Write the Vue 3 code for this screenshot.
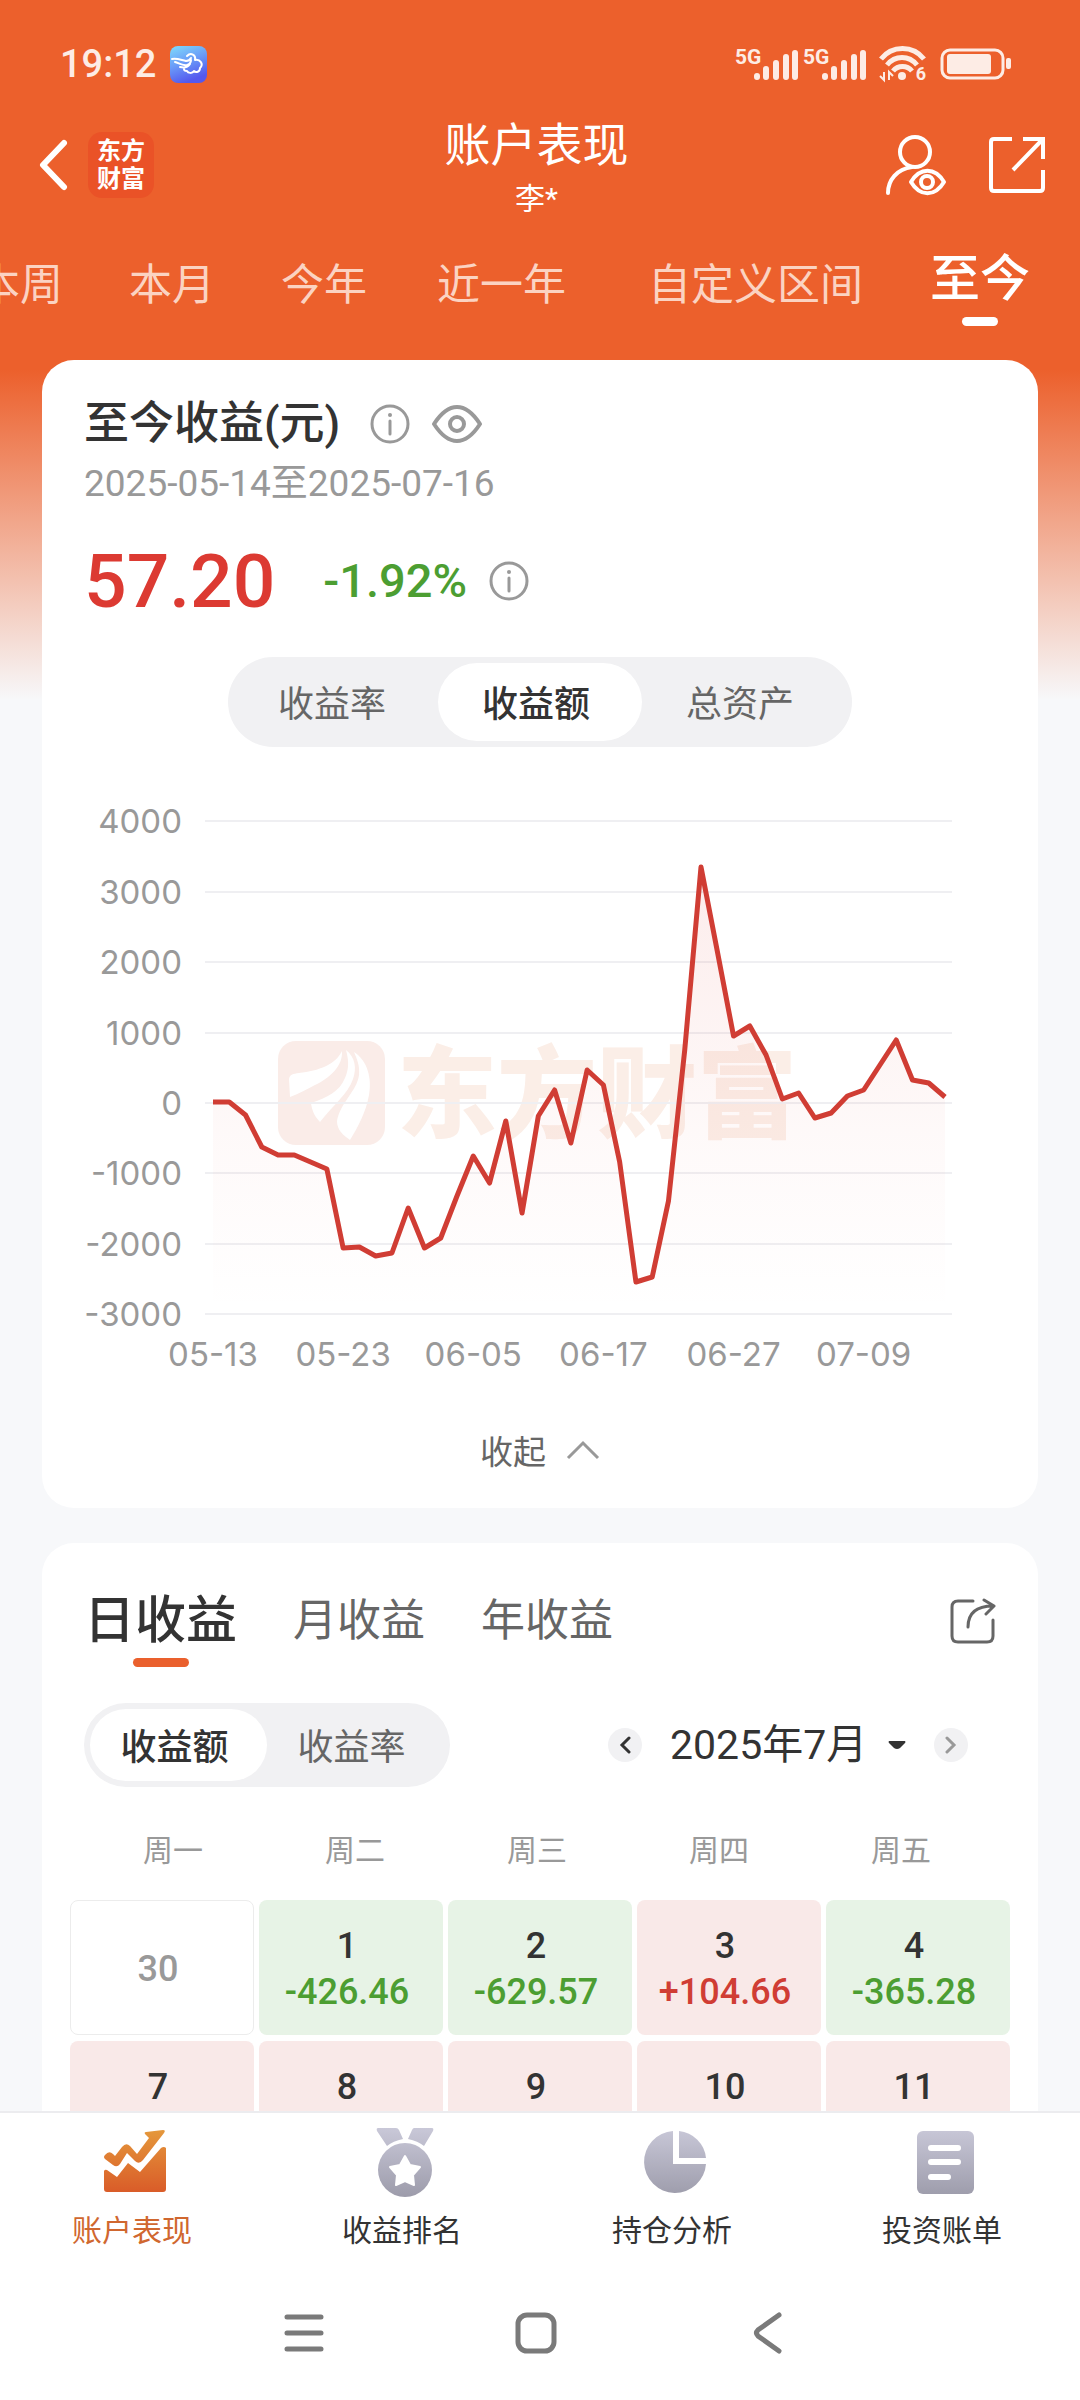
<template>
  <div class="page">
    <main class="scroll">
      <div class="status-bar">
        <span class="status-time">19:12</span>
        <svg class="status-app" width="37" height="37" viewBox="0 0 37 37" aria-hidden="true">
          <defs>
            <linearGradient id="app-bg" x1="0" y1="0" x2="0.4" y2="1">
              <stop offset="0" stop-color="#7fdcfb" />
              <stop offset="0.5" stop-color="#6b9df8" />
              <stop offset="1" stop-color="#5458ee" />
            </linearGradient>
          </defs>
          <rect width="37" height="37" rx="8" fill="url(#app-bg)" />
          <path
            d="M2 13c5-1 9 1 14 2 3 0 4-1 5-3M5 16c4 1 7 4 12 3 3-1 4-3 4-5M10 21c4 1 8 0 10-3"
            fill="none"
            stroke="#fff"
            stroke-width="2"
            stroke-linecap="round"
          />
          <path
            d="M17 10c4-4 9-1 8 4 5-1 9 4 5 8 0 4-4 5-6 3-2 3-6 2-7 0-2 0-3 0-3-2"
            fill="none"
            stroke="#fff"
            stroke-width="2"
            stroke-linecap="round"
            stroke-linejoin="round"
          />
        </svg>
        <div class="status-icons">
          <div v-for="n in 2" :key="n" class="signal">
            <span class="signal-text">5G</span>
            <svg width="46" height="32" viewBox="0 0 46 32" aria-hidden="true">
              <path
                d="M4 28v-1M13 28v-8M23 28V14M33 28V8M42 28V4"
                fill="none"
                stroke="#fdece5"
                stroke-width="6"
                stroke-linecap="round"
              />
            </svg>
          </div>
          <div class="wifi">
            <svg width="47" height="38" viewBox="0 0 47 38" aria-hidden="true">
              <g fill="none" stroke="#fdece5" stroke-width="5">
                <path d="M2 14c11-14 32-14 43 0" />
                <path d="M8 20c8-10 22-10 30 0" />
                <path d="M14 26c5-6 14-6 19 0" />
              </g>
              <circle cx="23" cy="31" r="4" fill="#fdece5" />
              <path d="M5 27v8l-4-4M10 35v-8l4 4" fill="none" stroke="#fdece5" stroke-width="2" />
            </svg>
            <span class="wifi-text">6</span>
          </div>
          <svg class="battery" width="71" height="32" viewBox="0 0 71 32" aria-hidden="true">
            <rect x="2" y="2" width="61" height="28" rx="8" fill="none" stroke="#fdece5" stroke-width="3" />
            <rect x="7" y="6" width="44" height="20" rx="3" fill="#fdece5" />
            <rect x="66" y="10" width="5" height="11" rx="2" fill="#fdece5" />
          </svg>
        </div>
      </div>

      <header class="app-bar">
        <div class="app-bar-side">
          <button type="button" class="icon-button" aria-label="返回">
            <svg width="30" height="52" viewBox="0 0 30 52">
              <path d="M26 4 5 26l21 22" fill="none" stroke="#fff" stroke-width="6" stroke-linecap="round" stroke-linejoin="round" />
            </svg>
          </button>
          <div class="brand">
            <span>东方</span>
            <span>财富</span>
          </div>
        </div>
        <div class="app-bar-title">
          <h1>账户表现</h1>
          <p>李*</p>
        </div>
        <div class="app-bar-side app-bar-side--right">
          <button type="button" class="icon-button" aria-label="账户">
            <svg width="62" height="62" viewBox="0 0 62 62" fill="none" stroke="#fff" stroke-width="4" stroke-linecap="round">
              <circle cx="30" cy="18" r="15" />
              <path d="M3 59c0-13 9-24 24-26" />
              <path d="M26 48c9-15 24-15 33 0-9 15-24 15-33 0Z" stroke-linejoin="round" />
              <circle cx="42" cy="48" r="6" />
            </svg>
          </button>
          <button type="button" class="icon-button" aria-label="分享">
            <svg width="56" height="58" viewBox="0 0 56 58" fill="none" stroke="#fff" stroke-width="4">
              <path d="M23 3H5q-3 0-3 3v46q0 3 3 3h46q3 0 3-3V34" />
              <path d="M34 3h20v20M53 4 24 34" />
            </svg>
          </button>
        </div>
      </header>

      <nav class="range-tabs">
        <button
          v-for="item in ranges"
          :key="item"
          type="button"
          class="range-tab"
          :class="{ 'range-tab--active': item === activeRange }"
          :style="{ width: `${item.length * 51 + 50}px` }"
          @click="activeRange = item"
        >
          {{ item }}
        </button>
      </nav>

      <section class="card summary">
        <div class="summary-head">
          <h2>至今收益(元)</h2>
          <button type="button" class="icon-button" aria-label="说明">
            <svg width="40" height="40" viewBox="0 0 40 40" fill="none" stroke="#999" stroke-width="3">
              <circle cx="20" cy="20" r="18" />
              <path d="M20 17v13" stroke-linecap="round" />
              <circle cx="20" cy="11" r="2" fill="#999" stroke="none" />
            </svg>
          </button>
          <button type="button" class="icon-button" aria-label="隐藏金额">
            <svg width="50" height="40" viewBox="0 0 50 40" fill="none" stroke="#999" stroke-width="4">
              <path d="M2 20Q13 3 25 3t23 17Q37 37 25 37T2 20Z" stroke-linejoin="round" />
              <circle cx="25" cy="20" r="7" />
            </svg>
          </button>
        </div>
        <p class="summary-range">2025-05-14至2025-07-16</p>
        <div class="summary-value">
          <strong class="amount">57.20</strong>
          <span class="rate">-1.92%</span>
          <button type="button" class="icon-button" aria-label="收益率说明">
            <svg width="40" height="40" viewBox="0 0 40 40" fill="none" stroke="#999" stroke-width="3">
              <circle cx="20" cy="20" r="18" />
              <path d="M20 17v13" stroke-linecap="round" />
              <circle cx="20" cy="11" r="2" fill="#999" stroke="none" />
            </svg>
          </button>
        </div>

        <div class="segment segment--chart">
          <button
            v-for="item in chartTypes"
            :key="item"
            type="button"
            class="segment-item"
            :class="{ 'segment-item--active': item === chartType }"
            @click="chartType = item"
          >
            {{ item }}
          </button>
        </div>

        <svg class="chart" viewBox="0 0 912 600" role="img" aria-label="收益额走势">
          <defs>
            <linearGradient id="area-fill" gradientUnits="userSpaceOnUse" x1="0" y1="76" x2="0" y2="523">
              <stop offset="0" stop-color="#e04038" stop-opacity="0.1" />
              <stop offset="0.6" stop-color="#e04038" stop-opacity="0.03" />
              <stop offset="1" stop-color="#e04038" stop-opacity="0" />
            </linearGradient>
          </defs>
          <g>
            <rect x="194" y="251" width="107" height="104" rx="18" fill="#faece8" />
            <path
              d="M205 289c1-5 4-5 10-6 20-2 37-9 43-22 1 15-12 27-27 34-8 4-17 9-25 12Z"
              fill="#fff"
            />
            <path d="M227 313c16-5 29-12 34-25 5-11 3-20 1-28 9 7 11 18 7 29-5 15-20 26-33 43-5-5-8-11-9-19Z" fill="#fff" />
            <path d="M270 262c14 9 18 27 15 43-3 17-11 32-19 45-7-5-13-10-13-19 3-18 20-30 22-46 1-9-2-16-5-23Z" fill="#fff" />
            <text x="313" y="340" class="watermark">东方财富</text>
          </g>
          <g v-for="tick in yTicks" :key="tick">
            <line x1="121" x2="868" :y1="toY(tick)" :y2="toY(tick)" stroke="#efeff2" stroke-width="2" />
            <text x="98" :y="toY(tick) + 12" class="axis-label axis-label--y">{{ tick }}</text>
          </g>
          <path :d="areaPath" fill="url(#area-fill)" />
          <path :d="linePath" fill="none" stroke="#d03d34" stroke-width="5" stroke-linejoin="round" />
          <text
            v-for="(label, i) in xLabels"
            :key="label"
            :x="toX(i * 8)"
            y="576"
            class="axis-label axis-label--x"
          >{{ label }}</text>
        </svg>

        <button type="button" class="collapse">
          收起
          <svg width="34" height="20" viewBox="0 0 34 20">
            <path d="M2 18 17 3l15 15" fill="none" stroke="#999" stroke-width="3" />
          </svg>
        </button>
      </section>

      <section class="card calendar-card">
        <div class="period-row">
          <div class="period-tabs">
            <button
              v-for="item in periods"
              :key="item"
              type="button"
              class="period-tab"
              :class="{ 'period-tab--active': item === activePeriod }"
              @click="activePeriod = item"
            >
              {{ item }}
            </button>
          </div>
          <button type="button" class="icon-button" aria-label="分享收益">
            <svg width="46" height="46" viewBox="0 0 46 46" fill="none" stroke="#666" stroke-width="3" stroke-linecap="round">
              <path d="M23 3H8Q2 3 2 9v29q0 6 6 6h29q6 0 6-6V22" />
              <path d="M18 29C18 14 27 8 43 8M34 2l10 6-8 8" stroke-linejoin="round" />
            </svg>
          </button>
        </div>

        <div class="filter-row">
          <div class="segment segment--small">
            <button
              v-for="item in metrics"
              :key="item"
              type="button"
              class="segment-item"
              :class="{ 'segment-item--active': item === metric }"
              @click="metric = item"
            >
              {{ item }}
            </button>
          </div>
          <div class="month-nav">
            <button type="button" class="round-button" aria-label="上个月">
              <svg width="12" height="18" viewBox="0 0 12 18">
                <path d="M10 2 3 9l7 7" fill="none" stroke="#333" stroke-width="3" stroke-linecap="round" />
              </svg>
            </button>
            <label class="month-picker">
              <select v-model="month" aria-label="月份">
                <option v-for="item in months" :key="item">{{ item }}</option>
              </select>
              <svg width="18" height="9" viewBox="0 0 18 9" aria-hidden="true">
                <path d="M1 0h16q1 1 0 2l-5 5q-3 2-6 0L1 2Q0 1 1 0Z" fill="#333" />
              </svg>
            </label>
            <button type="button" class="round-button" aria-label="下个月">
              <svg width="12" height="18" viewBox="0 0 12 18">
                <path d="m2 2 7 7-7 7" fill="none" stroke="#999" stroke-width="3" stroke-linecap="round" />
              </svg>
            </button>
          </div>
        </div>

        <table class="calendar">
          <thead>
            <tr>
              <th v-for="day in weekdays" :key="day" scope="col">{{ day }}</th>
            </tr>
          </thead>
          <tbody>
            <tr v-for="(week, i) in weeks" :key="i">
              <td v-for="cell in week" :key="cell.day" class="day" :class="`day--${cell.type}`">
                <span class="day-number">{{ cell.day }}</span>
                <span v-if="cell.value" class="day-value">{{ cell.value }}</span>
              </td>
            </tr>
          </tbody>
        </table>
      </section>
    </main>

    <footer>
      <nav class="tab-bar">
        <a href="#" class="tab-item tab-item--active">
          <svg width="64" height="70" viewBox="0 0 64 70">
            <defs>
              <linearGradient id="tab-on" x1="0" y1="0" x2="0" y2="1" gradientUnits="userSpaceOnUse" gradientTransform="scale(1 66)">
                <stop offset="0" stop-color="#e59a3c" />
                <stop offset="1" stop-color="#d95a28" />
              </linearGradient>
            </defs>
            <path
              d="M2 27q4-5 8-1l2 2 7-9q4-5 8-1l7 8 12-16-4-4q-1-2 1-2L60 2q3 0 1 3L40 32q-4 5-8 1l-8-8-7 11q-3 4-7 1l-8-6q-2-2 0-4Z"
              fill="url(#tab-on)"
            />
            <path d="M1 43q1-2 3-1l10 7 11-14 12 9 21-24q3-2 5 0v41q0 3-3 3H4q-3 0-3-3Z" fill="url(#tab-on)" />
          </svg>
          <span>账户表现</span>
        </a>
        <a href="#" class="tab-item">
          <svg width="64" height="70" viewBox="0 0 64 70">
            <defs>
              <linearGradient id="tab-off" x1="0" y1="0" x2="0" y2="1" gradientUnits="userSpaceOnUse" gradientTransform="scale(1 68)">
                <stop offset="0" stop-color="#c9c8d8" />
                <stop offset="1" stop-color="#9d9cab" />
              </linearGradient>
            </defs>
            <path d="M5 0h18q2 0 3 2l4 9q-10 2-16 7L4 3q-1-3 1-3ZM41 0h18q2 0 1 3l-9 15q-6-5-16-7l4-9q1-2 2-2Z" fill="url(#tab-off)" />
            <circle cx="32" cy="42" r="27" fill="url(#tab-off)" />
            <path d="m32 28 5 9 10 2-7 8 1 10-9-4-9 4 1-10-7-8 10-2Z" fill="#fff" stroke="#fff" stroke-width="2" stroke-linejoin="round" />
          </svg>
          <span>收益排名</span>
        </a>
        <a href="#" class="tab-item">
          <svg width="64" height="70" viewBox="0 0 64 70">
            <path d="M30 3a31 31 0 1 0 33 33H30Z" fill="url(#tab-off)" />
            <path d="M36 3a30 30 0 0 1 27 27H36Z" fill="url(#tab-off)" />
          </svg>
          <span>持仓分析</span>
        </a>
        <a href="#" class="tab-item">
          <svg width="64" height="70" viewBox="0 0 64 70">
            <rect x="4" y="3" width="57" height="63" rx="6" fill="url(#tab-off)" />
            <path d="M18 20h27M18 34h27M18 49h17" stroke="#fff" stroke-width="6" stroke-linecap="round" />
          </svg>
          <span>投资账单</span>
        </a>
      </nav>
      <div class="system-bar">
        <button type="button" class="icon-button" aria-label="最近任务">
          <svg width="44" height="44" viewBox="0 0 44 44">
            <path d="M5 6h34M5 22h34M5 38h34" stroke="#7a7a7a" stroke-width="5" stroke-linecap="round" />
          </svg>
        </button>
        <button type="button" class="icon-button" aria-label="主屏幕">
          <svg width="44" height="44" viewBox="0 0 44 44">
            <rect x="4" y="4" width="36" height="36" rx="9" fill="none" stroke="#7a7a7a" stroke-width="5" />
          </svg>
        </button>
        <button type="button" class="icon-button" aria-label="系统返回">
          <svg width="44" height="44" viewBox="0 0 44 44">
            <path d="M33 4 12 19q-3 3 0 6l21 15" fill="none" stroke="#7a7a7a" stroke-width="5" stroke-linecap="round" />
          </svg>
        </button>
      </div>
    </footer>
  </div>
</template>

<script setup>
import { computed, ref } from 'vue'

const ranges = ['本周', '本月', '今年', '近一年', '自定义区间', '至今']
const activeRange = ref('至今')

const chartTypes = ['收益率', '收益额', '总资产']
const chartType = ref('收益额')

const periods = ['日收益', '月收益', '年收益']
const activePeriod = ref('日收益')

const metrics = ['收益额', '收益率']
const metric = ref('收益额')

const months = ['2025年5月', '2025年6月', '2025年7月']
const month = ref('2025年7月')

const yTicks = [4000, 3000, 2000, 1000, 0, -1000, -2000, -3000]
const xLabels = ['05-13', '05-23', '06-05', '06-17', '06-27', '07-09']
const profits = [
  10, 10, -166, -620, -742, -735, -842, -935, -2055, -2040, -2170, -2125,
  -1490, -2055, -1920, -1320, -750, -1130, -250, -1565, -180, 180, -565, 475,
  260, -842, -2540, -2470, -1388, 757, 3358, 2160, 950, 1090, 675, 50,
  135, -210, -135, 97, 180, 535, 900, 320, 280, 85,
]

const toX = (index) => 129 + (index * 732) / (profits.length - 1)
const toY = (value) => Math.round(313 - (value * 704) / 10000)

const linePath = computed(() => `M${profits.map((v, i) => `${toX(i)} ${toY(v)}`).join('L')}`)
const areaPath = computed(
  () => `${linePath.value}L${toX(profits.length - 1)} ${toY(-3000)}L${toX(0)} ${toY(-3000)}Z`
)

const weekdays = ['周一', '周二', '周三', '周四', '周五']
const weeks = [
  [
    { day: 30, type: 'muted' },
    { day: 1, value: '-426.46', type: 'loss' },
    { day: 2, value: '-629.57', type: 'loss' },
    { day: 3, value: '+104.66', type: 'gain' },
    { day: 4, value: '-365.28', type: 'loss' },
  ],
  [
    { day: 7, type: 'gain' },
    { day: 8, type: 'gain' },
    { day: 9, type: 'gain' },
    { day: 10, type: 'gain' },
    { day: 11, type: 'gain' },
  ],
]
</script>

<style>
body {
  margin: 0;
}
</style>

<style scoped>
.page {
  display: flex;
  flex-direction: column;
  height: 100vh;
  overflow: hidden;
  background: #f7f8fa;
  color: #333;
  font-family: Roboto, 'Noto Sans CJK SC', sans-serif;
}

.scroll {
  flex: 1;
  min-height: 0;
  overflow-x: hidden;
  overflow-y: auto;
  scrollbar-width: none;
  background: linear-gradient(#ec602c 0, #ec602c 370px, #f7f8fa 700px);
}

button,
select {
  padding: 0;
  border: 0;
  background: none;
  color: inherit;
  font: inherit;
  cursor: pointer;
}

h1,
h2,
p {
  margin: 0;
  font-weight: 400;
}

svg {
  display: block;
  flex: none;
}

.icon-button {
  display: flex;
}

.status-bar {
  display: flex;
  align-items: center;
  height: 48px;
  padding: 40px 69px 0 60px;
}

.status-time {
  color: #fdece5;
  font-size: 38px;
  line-height: 48px;
  font-weight: 500;
}

.status-app {
  margin-left: 14px;
}

.status-icons {
  display: flex;
  align-items: center;
  margin-left: auto;
}

.signal {
  display: grid;
  margin-right: 4px;
}

.signal-text,
.signal svg {
  grid-area: 1 / 1;
}

.signal svg {
  margin: 2px 0 0 18px;
}

.signal-text {
  color: #fdece5;
  font-size: 21px;
  line-height: 20px;
  font-weight: 700;
}

.wifi {
  display: grid;
  margin: 0 14px 0 8px;
}

.wifi svg,
.wifi-text {
  grid-area: 1 / 1;
}

.wifi-text {
  place-self: end;
  color: #fdece5;
  font-size: 18px;
  line-height: 18px;
  font-weight: 700;
}

.app-bar {
  display: grid;
  grid-template-columns: 1fr auto 1fr;
  align-items: center;
  height: 154px;
  padding: 0 35px 0 38px;
}

.app-bar-side {
  display: flex;
  align-items: center;
  gap: 20px;
}

.app-bar-side--right {
  justify-content: flex-end;
  gap: 42px;
}

.brand {
  display: flex;
  flex-direction: column;
  align-items: center;
  justify-content: center;
  width: 66px;
  height: 66px;
  border-radius: 14px;
  background: #ea5227;
  color: #fff;
  font-size: 24px;
  line-height: 28px;
  font-weight: 700;
}

.app-bar-title {
  display: flex;
  flex-direction: column;
  gap: 4px;
  padding: 4px 10px 0 0;
  color: #fff;
  text-align: center;
}

.app-bar-title h1 {
  font-size: 46px;
  line-height: 60px;
}

.app-bar-title p {
  font-size: 30px;
  line-height: 40px;
}

.range-tabs {
  display: flex;
  justify-content: flex-end;
  padding: 13px 20px 34px 0;
}

.range-tab {
  display: flex;
  flex: none;
  flex-direction: column;
  align-items: center;
  height: 71px;
  color: #fbd3c2;
  font-size: 43px;
  line-height: 60px;
  white-space: nowrap;
}

.range-tab--active {
  gap: 14px;
  padding-right: 8px;
  color: #fff;
  font-size: 50px;
  line-height: 48px;
  font-weight: 500;
}

.range-tab--active::after {
  content: '';
  width: 36px;
  height: 9px;
  border-radius: 5px;
  background: #fff;
}

.card {
  margin: 0 42px;
  border-radius: 32px;
  background: #fff;
}

.summary {
  padding: 34px 42px 28px;
}

.summary-head {
  display: flex;
  align-items: center;
}

.summary-head h2 {
  margin-right: 30px;
  font-size: 45px;
  line-height: 60px;
  font-weight: 500;
}

.summary-head .icon-button + .icon-button {
  margin-left: 22px;
}

.summary-range {
  margin-top: 8px;
  color: #999;
  font-size: 37px;
  line-height: 44px;
}

.summary-value {
  display: flex;
  align-items: center;
  margin-top: 30px;
  line-height: 90px;
}

.amount {
  color: #dc3a32;
  font-size: 75px;
  font-weight: 500;
}

.rate {
  margin: 0 22px 0 48px;
  color: #4c9e32;
  font-size: 47px;
  font-weight: 500;
}

.segment {
  display: flex;
  box-sizing: border-box;
  padding: 6px;
  border-radius: 45px;
  background: #f1f1f3;
}

.segment-item {
  flex: 1;
  padding: 0 8px 2px 0;
  border-radius: 40px;
  color: #666;
  font-size: 36px;
}

.segment-item--active {
  background: #fff;
  color: #333;
  font-weight: 500;
}

.segment--chart {
  width: 624px;
  height: 90px;
  margin: 31px auto 0;
}

.segment--small {
  width: 366px;
  height: 84px;
}

.chart {
  width: 100%;
  margin-top: 43px;
  overflow: visible;
}

.axis-label {
  fill: #999;
  font-family: Inter, sans-serif;
  font-size: 33px;
}

.axis-label--y {
  text-anchor: end;
}

.axis-label--x {
  text-anchor: middle;
}

.watermark {
  fill: #fbeee7;
  font-family: 'Noto Sans CJK SC', sans-serif;
  font-size: 100px;
  font-weight: 900;
}

.collapse {
  display: flex;
  align-items: center;
  gap: 20px;
  height: 60px;
  margin: 30px auto 0;
  color: #666;
  font-size: 33px;
}

.calendar-card {
  margin-top: 35px;
  padding: 48px 28px 28px;
}

.period-row,
.filter-row {
  display: flex;
  align-items: center;
  justify-content: space-between;
  padding: 0 14px;
}

.period-row {
  align-items: flex-start;
}

.period-row > .icon-button {
  margin-top: 7px;
}

.period-tabs {
  display: flex;
  align-items: flex-start;
  gap: 56px;
}

.period-tab {
  color: #666;
  font-size: 44px;
  line-height: 60px;
}

.period-tab--active {
  display: flex;
  flex-direction: column;
  align-items: center;
  gap: 7px;
  color: #333;
  font-size: 51px;
  font-weight: 500;
}

.period-tab--active::after {
  content: '';
  width: 56px;
  height: 9px;
  border-radius: 5px;
  background: #ea602d;
}

.filter-row {
  margin-top: 36px;
}

.month-nav {
  display: flex;
  align-items: center;
  gap: 28px;
  margin-right: 28px;
}

.round-button {
  display: flex;
  align-items: center;
  justify-content: center;
  width: 34px;
  height: 34px;
  border-radius: 50%;
  background: #f1f1f3;
}

.month-picker {
  display: flex;
  align-items: center;
  gap: 20px;
}

.month-picker select {
  appearance: none;
  font-size: 41px;
  line-height: 60px;
}

.calendar,
.calendar thead,
.calendar tbody {
  display: block;
}

.calendar {
  margin-top: 42px;
}

.calendar tr {
  display: grid;
  grid-template-columns: repeat(5, 1fr);
}

.calendar thead tr {
  padding: 0 18px 0 12px;
}

.calendar tbody tr {
  gap: 5px;
  margin-bottom: 6px;
}

.calendar tbody {
  margin-top: 27px;
}

.calendar th {
  padding: 0;
  color: #999;
  font-size: 30px;
  line-height: 44px;
  font-weight: 400;
}

.day {
  display: flex;
  flex-direction: column;
  align-items: center;
  gap: 2px;
  box-sizing: border-box;
  height: 135px;
  padding: 24px 8px 0 0;
  border-radius: 8px;
  font-size: 36px;
  line-height: 44px;
  font-weight: 500;
}

.day--muted {
  justify-content: center;
  padding: 2px 8px 0 0;
  border: 1px solid #ececec;
  color: #999;
}

.day--loss {
  background: #e7f3e6;
}

.day--gain {
  background: #f9e9e8;
}

.day--loss .day-value {
  color: #4c9e32;
}

.day--gain .day-value {
  color: #d03d34;
}

footer {
  background: #fff;
  border-top: 2px solid #ececef;
}

.tab-bar {
  display: grid;
  grid-template-columns: repeat(4, 1fr);
  padding: 15px 0;
}

.tab-item {
  display: flex;
  flex-direction: column;
  align-items: center;
  gap: 13px;
  color: #333;
  font-size: 30px;
  line-height: 40px;
  text-decoration: none;
}

.tab-item span {
  padding-right: 6px;
}

.tab-item--active {
  color: #d0672f;
}

.system-bar {
  display: flex;
  align-items: center;
  justify-content: center;
  gap: 188px;
  height: 134px;
  padding-right: 9px;
}
</style>
